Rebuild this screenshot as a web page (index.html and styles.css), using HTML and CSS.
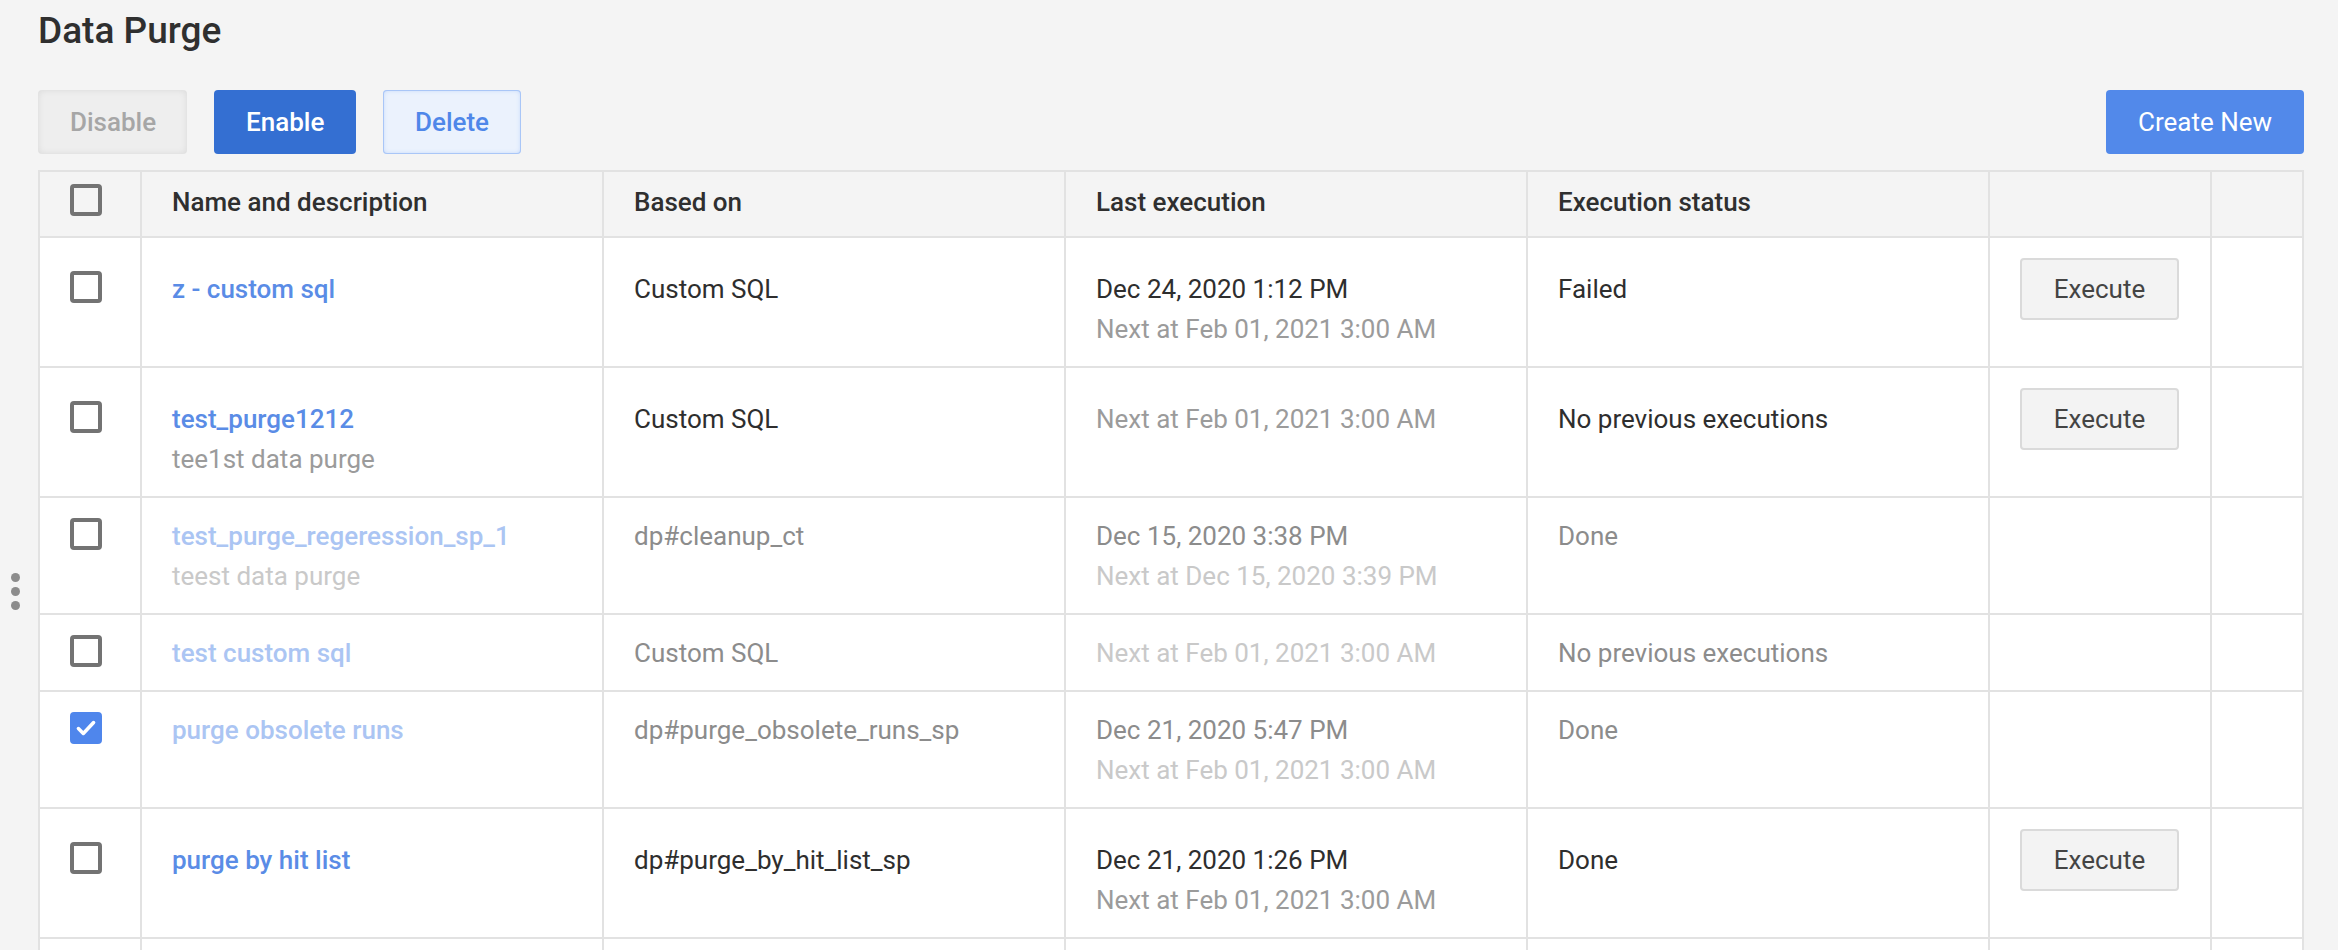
FILE: index.html
```html
<!DOCTYPE html>
<html lang="en">
<head>
    <meta charset="UTF-8">
    <title>Data Purge</title>
    <link rel="stylesheet" href="styles.css">
</head>
<body>
    <div class="grip"><span></span><span></span><span></span></div>

    <h1 class="page-title">Data Purge</h1>

    <div class="toolbar">
        <div class="toolbar-left">
            <button class="btn btn-disabled">Disable</button>
            <button class="btn btn-primary">Enable</button>
            <button class="btn btn-soft">Delete</button>
        </div>
        <button class="btn btn-create">Create New</button>
    </div>

    <table class="purge-table">
        <colgroup>
            <col class="col-check">
            <col class="col-wide">
            <col class="col-wide">
            <col class="col-wide">
            <col class="col-wide">
            <col class="col-action">
            <col>
        </colgroup>
        <thead>
            <tr>
                <th><span class="cb"></span></th>
                <th>Name and description</th>
                <th>Based on</th>
                <th>Last execution</th>
                <th>Execution status</th>
                <th></th>
                <th></th>
            </tr>
        </thead>
        <tbody>
            <tr>
                <td><span class="cb"></span></td>
                <td><a class="name">z - custom sql</a></td>
                <td>Custom SQL</td>
                <td>Dec 24, 2020 1:12 PM<div class="muted">Next at Feb 01, 2021 3:00 AM</div></td>
                <td>Failed</td>
                <td><button class="btn-exec">Execute</button></td>
                <td></td>
            </tr>
            <tr>
                <td><span class="cb"></span></td>
                <td><a class="name">test_purge1212</a><div class="muted">tee1st data purge</div></td>
                <td>Custom SQL</td>
                <td><span class="muted">Next at Feb 01, 2021 3:00 AM</span></td>
                <td>No previous executions</td>
                <td><button class="btn-exec">Execute</button></td>
                <td></td>
            </tr>
            <tr class="off">
                <td><span class="cb"></span></td>
                <td><a class="name">test_purge_regeression_sp_1</a><div class="muted">teest data purge</div></td>
                <td>dp#cleanup_ct</td>
                <td>Dec 15, 2020 3:38 PM<div class="muted">Next at Dec 15, 2020 3:39 PM</div></td>
                <td>Done</td>
                <td></td>
                <td></td>
            </tr>
            <tr class="off">
                <td><span class="cb"></span></td>
                <td><a class="name">test custom sql</a></td>
                <td>Custom SQL</td>
                <td><span class="muted">Next at Feb 01, 2021 3:00 AM</span></td>
                <td>No previous executions</td>
                <td></td>
                <td></td>
            </tr>
            <tr class="off">
                <td><span class="cb checked"><svg viewBox="0 0 24 24"><path d="M5.5 12.5l4.2 4.2 8.8-9.4" /></svg></span></td>
                <td><a class="name">purge obsolete runs</a></td>
                <td>dp#purge_obsolete_runs_sp</td>
                <td>Dec 21, 2020 5:47 PM<div class="muted">Next at Feb 01, 2021 3:00 AM</div></td>
                <td>Done</td>
                <td></td>
                <td></td>
            </tr>
            <tr>
                <td><span class="cb"></span></td>
                <td><a class="name">purge by hit list</a></td>
                <td>dp#purge_by_hit_list_sp</td>
                <td>Dec 21, 2020 1:26 PM<div class="muted">Next at Feb 01, 2021 3:00 AM</div></td>
                <td>Done</td>
                <td><button class="btn-exec">Execute</button></td>
                <td></td>
            </tr>
            <tr>
                <td><span class="cb"></span></td>
                <td>&nbsp;</td>
                <td></td>
                <td></td>
                <td></td>
                <td></td>
                <td></td>
            </tr>
        </tbody>
    </table>
</body>
</html>
```

FILE: styles.css
```css
html, body {
    overflow: hidden;
}
body {
    margin: 0;
    padding: 0 34px 0 38px;
    background-color: #f4f4f4;
    color: #2e2e2e;
    font-family: Roboto, "Liberation Sans", sans-serif;
    font-size: 26px;
    position: relative;
}
.page-title {
    margin: 0;
    padding-top: 9px;
    font-size: 37px;
    font-weight: 500;
    line-height: 44px;
    color: #2f2f2f;
}

/* resize handle on the left edge */
.grip {
    position: absolute;
    left: 11px;
    top: 573px;
    display: flex;
    flex-direction: column;
    gap: 5px;
}
.grip span {
    width: 9px;
    height: 9px;
    border-radius: 50%;
    background-color: #8c8c8c;
}

.toolbar {
    display: flex;
    justify-content: space-between;
    align-items: center;
    margin-top: 37px;
    margin-bottom: 16px;
}
.toolbar-left {
    display: flex;
    gap: 27px;
}
.btn {
    height: 64px;
    padding: 0 32px;
    border: none;
    border-radius: 4px;
    font-family: inherit;
    font-size: 26px;
    font-weight: 500;
    white-space: nowrap;
    cursor: pointer;
}
.btn-disabled {
    width: 149px;
    background-color: #eeeeee;
    color: #a6a6a6;
    box-shadow: inset 0 0 7px rgba(0, 0, 0, 0.09);
}
.btn-primary {
    width: 142px;
    background-color: #346fd2;
    color: #ffffff;
}
.btn-soft {
    width: 138px;
    background-color: #ebf2fd;
    color: #4f87e9;
    box-shadow: inset 0 0 0 1px #a9c6f7, inset 0 0 5px #bcd3fa;
}
.btn-create {
    width: 198px;
    padding: 0;
    background-color: #5289ea;
    color: #ffffff;
    font-weight: 400;
}

.purge-table {
    width: 100%;
    table-layout: fixed;
    border-collapse: collapse;
    border: 2px solid #e2e2e2;
}
.col-check { width: 102px; }
.col-wide { width: 462px; }
.col-action { width: 222px; }

.purge-table th,
.purge-table td {
    border: 2px solid #e2e2e2;
    text-align: left;
    vertical-align: baseline;
    line-height: 40px;
    white-space: nowrap;
}
.purge-table th {
    padding: 10px 30px 14px;
    background-color: #f4f4f4;
    font-weight: 500;
    color: #2f2f2f;
}
.purge-table td {
    padding: 18px 30px 17px;
    background-color: #ffffff;
    font-weight: 400;
}

.cb {
    display: inline-block;
    width: 32px;
    height: 32px;
    box-sizing: border-box;
    border: 4px solid #737373;
    border-radius: 4px;
    vertical-align: -5px;
}
.cb.checked {
    border-color: #4f86ec;
    background-color: #4f86ec;
}
.cb svg {
    display: block;
    width: 28px;
    height: 28px;
    margin: -2px 0 0 -2px;
    fill: none;
    stroke: #ffffff;
    stroke-width: 3;
    stroke-linecap: round;
    stroke-linejoin: round;
}

.name {
    color: #5a8ce6;
    font-weight: 500;
    cursor: pointer;
}
.muted {
    color: #9b9b9b;
}

.btn-exec {
    margin-top: 2px;
    width: 159px;
    height: 62px;
    border: 2px solid #dadada;
    border-radius: 4px;
    background-color: #f3f3f3;
    color: #444444;
    font-family: inherit;
    font-size: 26px;
    line-height: 58px;
    padding: 0;
    cursor: pointer;
}

/* rows of disabled purges */
.off td {
    color: #8c8c8c;
}
.off .name {
    color: #abc5f3;
}
.off .muted {
    color: #c9c9c9;
}
```
